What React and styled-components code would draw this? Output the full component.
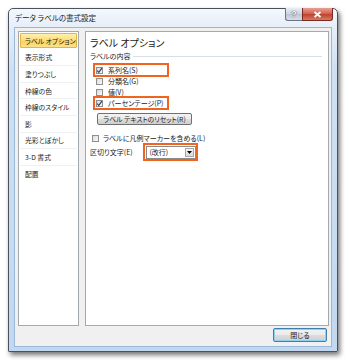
import React from 'react'
import styled, { createGlobalStyle, css } from 'styled-components'

const GlobalStyle = createGlobalStyle`
    html, body {
        margin: 0;
        padding: 0;
        background: #fff;
    }
    body {
        font-family: "Noto Sans CJK JP", "Liberation Sans", sans-serif;
        font-feature-settings: "palt";
        color: #1b1b1b;
    }
`

const categories = ['ラベル オプション', '表示形式', '塗りつぶし', '枠線の色', '枠線のスタイル', '影', '光彩とぼかし', '3-D 書式', '配置']

const contents = [
    { label: '系列名(S)', checked: true, marked: true },
    { label: '分類名(G)', checked: false },
    { label: '値(V)', checked: false },
    { label: 'パーセンテージ(P)', checked: true, marked: true },
]

const CheckBox = ({ checked }) => (
    <Box>
        {checked && (
            <svg width="7" height="7" viewBox="0 0 7 7">
                <path d="M1.2 3.6 L2.8 5.3 L5.9 1.2" fill="none" stroke="#2a3f73" strokeWidth="1.2" />
            </svg>
        )}
    </Box>
)

export default function App() {
    return (
        <Page>
            <GlobalStyle />
            <Window>
                <TitleBar>
                    <Title>データ ラベルの書式設定</Title>
                    <Caption>
                        <HelpButton>?</HelpButton>
                        <CloseButton>
                            <svg width="9" height="7" viewBox="0 0 9 7">
                                <path d="M1.5 1 L7.5 6 M7.5 1 L1.5 6" stroke="#fff" strokeWidth="1.8" />
                            </svg>
                        </CloseButton>
                    </Caption>
                </TitleBar>
                <Client>
                    <Body>
                        <CategoryList>
                            {categories.map((c, i) => (
                                <Category key={c} selected={i === 0} last={i === categories.length - 1}>
                                    {c}
                                </Category>
                            ))}
                        </CategoryList>
                        <Panel>
                            <Heading>ラベル オプション</Heading>
                            <GroupHeader>ラベルの内容</GroupHeader>
                            <CheckList>
                                {contents.map(c => (
                                    <CheckRow key={c.label} marked={c.marked}>
                                        <CheckBox checked={c.checked} />
                                        {c.label}
                                    </CheckRow>
                                ))}
                            </CheckList>
                            <ResetButton>ラベル テキストのリセット(R)</ResetButton>
                            <LegendRow>
                                <CheckBox />
                                ラベルに凡例マーカーを含める(L)
                            </LegendRow>
                            <SeparatorRow>
                                <SeparatorLabel>区切り文字(E)</SeparatorLabel>
                                <Marker>
                                    <Select>
                                        <span>(改行)</span>
                                        <SelectArrow>
                                            <svg width="5" height="3" viewBox="0 0 5 3">
                                                <path d="M0 0 H5 L2.5 3 Z" fill="#000" />
                                            </svg>
                                        </SelectArrow>
                                    </Select>
                                </Marker>
                            </SeparatorRow>
                        </Panel>
                    </Body>
                    <Footer>
                        <CloseDialogButton>閉じる</CloseDialogButton>
                    </Footer>
                </Client>
            </Window>
        </Page>
    )
}

const orange = '#f0641e'

const Page = styled.div`
    padding: 8px 0 0 8px;
    width: 350px;
    height: 364px;
    box-sizing: border-box;
`

const Window = styled.div`
    width: 330px;
    height: 344px;
    box-sizing: border-box;
    border: 1px solid #4a525e;
    border-radius: 5px 5px 1px 1px;
    background: linear-gradient(to bottom, #f4f8fc 0, #e6eef8 18px, #cfe0f3 60px, #c2d8f0 100%);
    box-shadow: 2px 3px 5px rgba(0, 0, 0, 0.55);
    display: flex;
    flex-direction: column;
`

const TitleBar = styled.div`
    height: 18px;
    display: flex;
    align-items: center;
    padding-left: 6px;
`

const Title = styled.div`
    font-size: 7.5px;
    line-height: 10px;
    color: #1a1a1a;
`

const Caption = styled.div`
    margin-left: auto;
    margin-right: 4px;
    align-self: flex-start;
    margin-top: -1px;
    display: flex;
`

const captionButton = css`
    height: 13px;
    box-sizing: border-box;
    display: flex;
    align-items: center;
    justify-content: center;
    border: 1px solid #6d7583;
    border-top: none;
`

const HelpButton = styled.div`
    ${captionButton};
    width: 17px;
    border-radius: 0 0 0 3px;
    border-right: none;
    background: linear-gradient(to bottom, #e9eef5, #c9d4e2 50%, #b8c6d8 51%, #d5dfeb);
    color: #fff;
    font-family: "Liberation Sans", sans-serif;
    font-weight: bold;
    font-size: 9px;
    text-shadow: 0 0 1px #445, 0 0 1px #445;
`

const CloseButton = styled.div`
    ${captionButton};
    width: 31px;
    border-radius: 0 0 3px 0;
    border-color: #7a2a22;
    background: linear-gradient(to bottom, #e8a093, #d0604c 50%, #c0402c 51%, #d87a5e);
`

const Client = styled.div`
    flex: 1;
    margin: 0 5px 4px 5px;
    border: 1px solid #9cb8d8;
    background: #f0f0f0;
    padding: 3px 2px 4px 3px;
    display: flex;
    flex-direction: column;
    min-height: 0;
`

const Body = styled.div`
    height: 295px;
    display: flex;
    gap: 6px;
`

const CategoryList = styled.div`
    width: 61px;
    box-sizing: border-box;
    border: 1px solid #a3a9b1;
    background: #fff;
    padding: 1px;
`

const Category = styled.div`
    height: 16.6px;
    box-sizing: border-box;
    display: flex;
    align-items: center;
    padding-left: 5px;
    font-size: 6.8px;
    white-space: nowrap;
    border-bottom: 1px solid ${p => (p.last ? 'transparent' : '#eef0f4')};
    ${p => p.selected && css`
        padding-left: 4px;
        border: 1px solid #e2b54a;
        border-radius: 1px;
        background: linear-gradient(to bottom, #fff0b0, #fddc73 50%, #fcd05a 51%, #fde28a);
        height: 15px;
        margin: 0 0 1.6px 0;
    `}
`

const Panel = styled.div`
    width: 244px;
    box-sizing: border-box;
    border: 1px solid #a3a9b1;
    background: #fff;
    padding: 5px 0 0 4px;
    display: flex;
    flex-direction: column;
    align-items: flex-start;
`

const Heading = styled.div`
    font-size: 10px;
    line-height: 12px;
    color: #1a1a1a;
`

const GroupHeader = styled.div`
    margin-top: 3px;
    align-self: stretch;
    display: flex;
    align-items: center;
    height: 8px;
    font-size: 7px;
    line-height: 8px;

    &::after {
        content: "";
        flex: 1;
        height: 1px;
        margin: 1px 6px 0 3px;
        background: #d8dfe6;
    }
`

const CheckList = styled.div`
    margin-top: 4.5px;
    padding-left: 6px;
    display: flex;
    flex-direction: column;
`

const Box = styled.span`
    width: 7px;
    height: 7px;
    box-sizing: border-box;
    border: 1px solid #8f8f8f;
    background: linear-gradient(135deg, #dcdcdc, #f8f8f8);
    display: inline-flex;
    align-items: center;
    justify-content: center;
    flex-shrink: 0;

    svg {
        margin: -1px;
    }
`

const Row = styled.div`
    height: 11px;
    display: flex;
    align-items: center;
    font-size: 7px;
    white-space: nowrap;
`

const CheckRow = styled(Row)`
    gap: 5px;
    position: relative;

    ${p => p.marked && css`
        &::after {
            content: "";
            position: absolute;
            left: -3px;
            top: -1.5px;
            width: 76px;
            height: 13.5px;
            box-sizing: border-box;
            border: 2.5px solid ${orange};
        }
    `}
`

const ResetButton = styled.div`
    margin: 4.5px 0 0 7px;
    width: 95px;
    height: 12px;
    box-sizing: border-box;
    border: 1px solid #707070;
    border-radius: 2px;
    background: linear-gradient(to bottom, #f2f2f2, #ebebeb 50%, #dddddd 51%, #cfcfcf);
    display: flex;
    align-items: center;
    justify-content: center;
    font-size: 6.8px;
    white-space: nowrap;
`

const LegendRow = styled(Row)`
    margin-top: 7.5px;
    padding-left: 2px;
    gap: 4px;
`

const SeparatorRow = styled.div`
    margin-top: 1px;
    height: 15px;
    display: flex;
    align-items: center;
`

const SeparatorLabel = styled.span`
    width: 53px;
    font-size: 7px;
    white-space: nowrap;
`

const Marker = styled.div`
    border: 2.5px solid ${orange};
    padding: 0.5px;
`

const Select = styled.div`
    width: 50px;
    height: 13px;
    box-sizing: border-box;
    border: 1px solid #8b8b8b;
    background: #fff;
    display: flex;
    align-items: center;
    font-size: 7px;
    padding: 1px 1px 1px 3px;

    span {
        flex: 1;
    }
`

const SelectArrow = styled.div`
    width: 9px;
    height: 9px;
    box-sizing: border-box;
    border: 1px solid #a8a8a8;
    background: linear-gradient(to bottom, #f4f4f4, #dadada);
    display: flex;
    align-items: center;
    justify-content: center;
`

const Footer = styled.div`
    margin-top: 2px;
    padding-right: 2px;
    display: flex;
    justify-content: flex-end;
`

const CloseDialogButton = styled.div`
    width: 54px;
    height: 14px;
    box-sizing: border-box;
    border: 1px solid #3c7fb1;
    border-radius: 2px;
    box-shadow: inset 0 0 0 1px #8fd0f5;
    background: linear-gradient(to bottom, #f2f2f2, #ebebeb 50%, #dddddd 51%, #cfcfcf);
    display: flex;
    align-items: center;
    justify-content: center;
    font-size: 7px;
`
